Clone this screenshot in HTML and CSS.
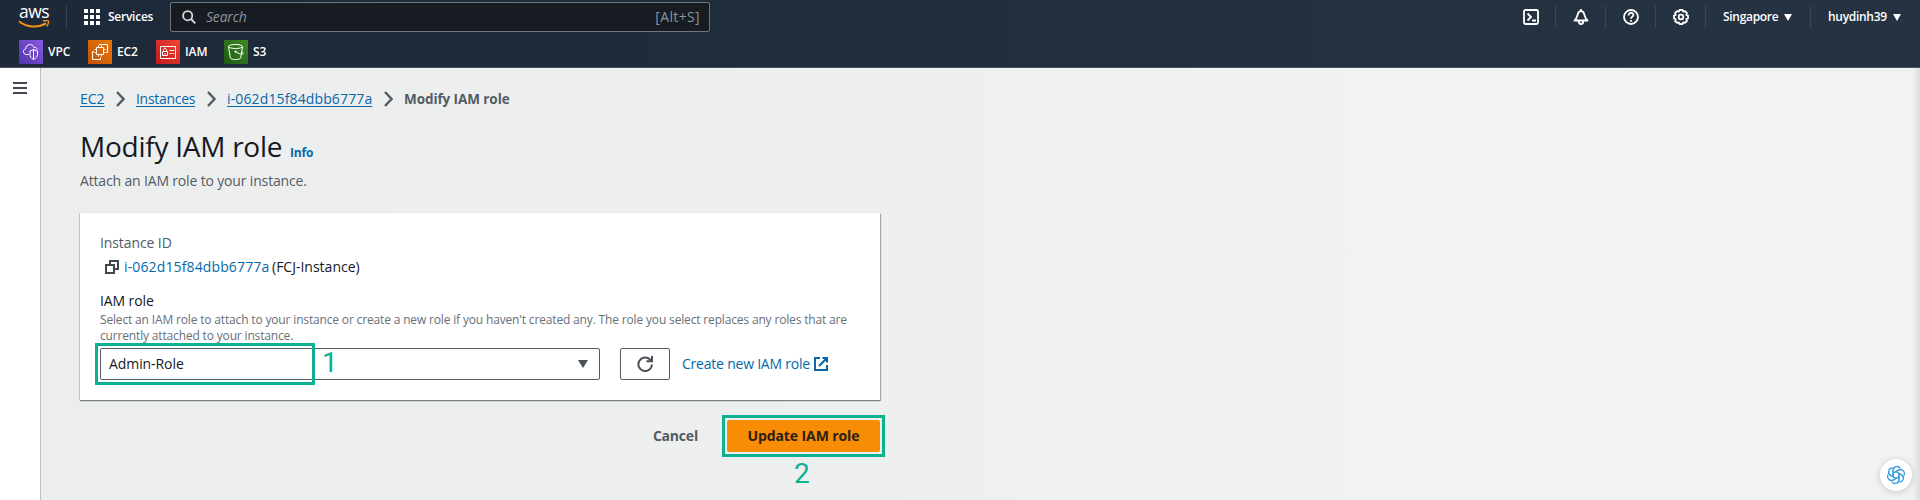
FILE: index.html
```html
<!DOCTYPE html>
<html lang="en">
<head>
<meta charset="utf-8">
<title>Modify IAM role</title>
<link rel="stylesheet" href="styles.css">
</head>
<body>
<header class="topbar">
  <div class="nav">
    <div class="logo">
      <span class="logo-text">aws</span>
      <svg class="logo-smile" width="32" height="9" viewBox="0 0 32 9" fill="none" stroke="#f39412"><path d="M1 1.200C8.500 7.600 20 8 28 3.300" stroke-width="2"/><path d="M25 1C28 .3 30.500.4 30.600 1.200 30.800 2.500 30 4.600 28.600 6.400" stroke-width="1.400"/></svg>
    </div>
    <i class="sep sep-logo"></i>
    <div class="services">
      <svg width="16" height="16" viewBox="0 0 16 16" fill="#fff"><path d="M0 0h4v4H0zM6 0h4v4H6zM12 0h4v4h-4zM0 6h4v4H0zM6 6h4v4H6zM12 6h4v4h-4zM0 12h4v4H0zM6 12h4v4H6zM12 12h4v4h-4z"/></svg>
      <span>Services</span>
    </div>
    <div class="search">
      <svg width="14" height="14" viewBox="0 0 14 14" fill="none" stroke="#d5dbdb" stroke-width="1.800"><circle cx="5.700" cy="5.700" r="4.600"/><path d="M9 9l4.300 4.300"/></svg>
      <span class="placeholder">Search</span>
      <span class="shortcut">[Alt+S]</span>
    </div>
    <div class="tools">
      <span class="tool"><svg width="16" height="16" viewBox="0 0 16 16" fill="none" stroke="#fff" stroke-width="1.800"><rect x="1" y="1" width="14" height="14" rx="1.500"/><path d="M4.500 4.500L8 8l-3.500 3.500M9 11.500h4"/></svg></span>
      <i class="sep"></i>
      <span class="tool"><svg width="16" height="16" viewBox="0 0 16 16" fill="none" stroke="#fff" stroke-width="1.800" stroke-linejoin="round"><path d="M8 0v2M1.500 11.500C4 9.500 4 7.500 4.800 5 5.500 3 6.500 2 8 2s2.500 1 3.200 3c.8 2.500.8 4.500 3.300 6.500zM5.700 12c0 4 4.600 4 4.600 0"/></svg></span>
      <i class="sep"></i>
      <span class="tool"><svg width="16" height="16" viewBox="0 0 16 16" fill="none" stroke="#fff" stroke-width="1.800"><circle cx="8" cy="8" r="7"/><path d="M5.700 6.500C5.500 3 10.400 3 10.400 6.100 10.400 8 8 7.700 8 9.800M8 11v1.800"/></svg></span>
      <i class="sep"></i>
      <span class="tool"><svg width="16" height="16" viewBox="0 0 16 16" fill="none" stroke="#fff" stroke-width="1.800" stroke-linejoin="round"><path d="M6.500 1h3l.7 1.700 1.800-.6 1.900 1.900-.6 1.800 1.700.7v3l-1.700.7.6 1.800-1.900 1.900-1.800-.6L9.500 15h-3l-.7-1.700-1.800.6L2.100 12l.6-1.800L1 9.500v-3l1.700-.7L2.100 4 4 2.100l1.800.6z"/><circle cx="8" cy="8" r="2.300"/></svg></span>
      <i class="sep"></i>
      <span class="account region">Singapore <b class="caret"></b></span>
      <i class="sep"></i>
      <span class="account user">huydinh39 <b class="caret"></b></span>
    </div>
  </div>
  <div class="favorites">
    <span class="fav fav-vpc"><svg class="tile vpc" viewBox="0 0 24 24"><path d="M10 14.500H7.200c-3.600-.3-3.600-5-.6-5.500C6.800 3.800 13.700 3 15 7.500c2-.3 3 .3 3.200 2M14.500 9.500l4 1.500v3.500c0 2.200-1.500 3.700-4 5-2.500-1.300-3.500-2.800-3.500-5V11zM14.500 9.500v10"/></svg>VPC</span>
    <span class="fav fav-ec2"><svg class="tile ec2" viewBox="0 0 24 24"><path d="M8.500 7.500h7v7h-7zM10.500 5.500v2M13.500 5.500v2M10.500 14.500v2M13.500 14.500v2M6.500 9.500h2M6.500 12.500h2M15.500 9.500h2M15.500 12.500h2M11.500 5.500v-1h8v8h-1.500M6 11.500H4.500v8h8V17.500"/></svg>EC2</span>
    <span class="fav fav-iam"><svg class="tile iam" viewBox="0 0 24 24"><path d="M4.500 6.500h15v12h-15zM6.500 11.500h5v4h-5zM7.500 11.500V9.800c0-2 3-2 3 0v1.700M9 13v1.500M13.500 10.500h4.500M13.500 13.500h2M16.500 13.500H18"/></svg>IAM</span>
    <span class="fav fav-s3"><svg class="tile s3" viewBox="0 0 24 24"><ellipse cx="11.500" cy="6.500" rx="7" ry="2"/><path d="M4.500 6.500l1.800 11.500c1 2 9.400 2 10.400 0l1.800-11.500M11 11.500c3 2 6.500 3 8 2.400 1-.8-.6-1.600-2-2.400"/><circle cx="11.500" cy="11.500" r=".7"/></svg>S3</span>
  </div>
</header>
<div class="shell">
  <aside class="rail">
    <svg width="14" height="12" viewBox="0 0 14 12" fill="#414750"><path d="M0 0h14v2H0zM0 5h14v2H0zM0 10h14v2H0z"/></svg>
  </aside>
  <main class="main">
    <nav class="crumbs">
      <a class="c-ec2">EC2</a><svg class="chev" viewBox="0 0 9 16"><path d="M1 1l6.500 7L1 15"/></svg>
      <a class="c-inst">Instances</a><svg class="chev" viewBox="0 0 9 16"><path d="M1 1l6.500 7L1 15"/></svg>
      <a class="c-id">i-062d15f84dbb6777a</a><svg class="chev" viewBox="0 0 9 16"><path d="M1 1l6.500 7L1 15"/></svg>
      <b>Modify IAM role</b>
    </nav>
    <div class="title"><h1>Modify IAM role</h1><a class="info">Info</a></div>
    <p class="lead">Attach an IAM role to your instance.</p>
    <section class="card">
      <div class="label muted">Instance ID</div>
      <div class="instance">
        <svg width="14" height="14" viewBox="0 0 14 14" fill="none" stroke="#414750" stroke-width="2"><path d="M1 5h8v8H1zM5 5V1h8v8H9"/></svg>
        <a class="id">i-062d15f84dbb6777a</a>
        <span class="iname">(FCJ-Instance)</span>
      </div>
      <div class="label role-label">IAM role</div>
      <div class="hint">Select an IAM role to attach to your instance or create a new role if you haven't created any. The role you select replaces any roles that are<br>currently attached to your instance.</div>
      <div class="controls">
        <div class="select">
          <span>Admin-Role</span>
          <svg width="10" height="8" viewBox="0 0 10 8" fill="#4a5057"><path d="M0 0h10L5 8z"/></svg>
          <div class="mark mark-one"></div>
          <span class="step step-one">1</span>
        </div>
        <div class="refresh"><svg width="16" height="16" viewBox="0 0 16 16" fill="none" stroke="#4a5057" stroke-width="2"><path d="M15 8.500A6.800 6.800 0 1 1 12.800 3.200L14.800 5"/><path d="M15 0v5.300H9.500"/></svg></div>
        <a class="create">Create new IAM role</a>
        <svg class="ext" width="14" height="14" viewBox="0 0 14 14" fill="none" stroke="#0668a9" stroke-width="2"><path d="M6 1H1v12h12V8M8.500 1H13v4.500M13 1L5 9"/></svg>
      </div>
    </section>
    <div class="actions">
      <span class="cancel">Cancel</span>
      <div class="update">Update IAM role<div class="mark mark-two"></div><span class="step step-two">2</span></div>
    </div>
  </main>
  <div class="assistant">
    <svg width="20" height="20" viewBox="-10 -10 20 20" fill="none" stroke="#3c9fe0" stroke-width="1.300" stroke-linejoin="round">
      <defs><path id="petal" d="M-3 1.700V-4.700C-3-8.800 2.400-9.800 4.300-6.600M-3-1.700L2.200-4.700C3.500-5.500 5-5.500 6-4.900"/></defs>
      <use href="#petal"/><use href="#petal" transform="rotate(60)"/><use href="#petal" transform="rotate(120)"/><use href="#petal" transform="rotate(180)"/><use href="#petal" transform="rotate(240)"/><use href="#petal" transform="rotate(300)"/>
    </svg>
  </div>
</div>
</body>
</html>
```
FILE: styles.css
```css
* { box-sizing: border-box; }
html { height: 500px; overflow: hidden; }
body {
  margin: 0;
  height: 500px;
  overflow: hidden;
  display: flex;
  flex-direction: column;
  font: 14px/20px "Open Sans", "Noto Sans", sans-serif;
  color: #16191f;
}
svg { flex: none; display: block; }
h1, p { margin: 0; }

.topbar {
  height: 68px;
  flex: none;
  background: linear-gradient(90deg, #1d2939, #1f2c3b 40%, #243240 75%, #253242);
  border-bottom: 1px solid #4a4f5c;
  color: #fff;
}
.nav { display: flex; height: 34px; align-items: center; padding-left: 18px; }
.logo { width: 32px; height: 34px; text-align: center; }
.logo-text { display: block; height: 20px; font-size: 17.5px; line-height: 22px; font-weight: 500; letter-spacing: -0.6px; }
.sep { width: 1px; height: 22px; background: #3b4754; flex: none; }
.sep-logo { margin-left: 16px; }
.services { display: flex; align-items: center; gap: 8px; margin-left: 17px; width: 86px; font-size: 12px; font-weight: 600; letter-spacing: -0.25px; }
.search {
  width: 540px;
  height: 30px;
  border: 1px solid #70777b;
  border-radius: 2px;
  background: #171c22;
  display: flex;
  align-items: center;
  padding: 0 9px 0 11px;
  color: #8a9499;
}
.placeholder { margin-left: 10px; flex: 1; font-style: italic; letter-spacing: -0.2px; }
.shortcut { letter-spacing: 0.35px; }
.tools { display: flex; align-items: center; margin-left: auto; }
.tool { width: 49px; display: flex; justify-content: center; }
.account { display: flex; align-items: center; font-size: 12px; font-weight: 600; letter-spacing: -0.3px; }
.caret { border: 4px solid transparent; border-top: 7px solid #fff; border-bottom: 0; }
.region { width: 104px; padding: 0 18px 0 17px; justify-content: space-between; }
.user { width: 109px; padding: 0 19px 0 17px; justify-content: space-between; }

.favorites { display: flex; padding: 6px 0 0 19px; }
.fav { display: flex; align-items: center; gap: 5px; font-size: 12px; font-weight: 600; line-height: 24px; letter-spacing: -0.1px; }
.fav-vpc { width: 69px; }
.fav-ec2, .fav-iam { width: 68px; }
.tile { width: 24px; height: 24px; fill: none; stroke: #fff; stroke-width: 1; }
.vpc { background: linear-gradient(45deg, #5033ad, #8a5be0); }
.ec2 { background: linear-gradient(45deg, #c95208, #e87808); }
.iam { background: linear-gradient(45deg, #c0191c, #ee4533); }
.s3 { background: linear-gradient(45deg, #1b5a12, #3f8a24); }

.shell {
  flex: 1;
  display: flex;
  position: relative;
  background: linear-gradient(90deg, transparent 1912px, #dcdedf 1920px), linear-gradient(90deg, #eceeee, #eef0f0 50%, #f1f3f2 75%);
}
.rail { width: 41px; border-right: 1px solid #bdc1c3; background: #fff; padding: 14px 0 0 13px; }
.main { width: 839px; padding: 0 0 0 39px; }

.crumbs { display: flex; align-items: center; height: 20px; margin-top: 21px; color: #545b64; white-space: nowrap; }
.crumbs a { flex: none; color: #0668a9; text-decoration: underline; text-underline-offset: 2px; }
.c-ec2 { width: 24px; }
.c-inst { width: 59px; letter-spacing: -0.3px; }
.c-id { width: 145px; letter-spacing: 0.13px; }
.chev { width: 9px; height: 16px; margin: 0 11.5px; fill: none; stroke: #545b64; stroke-width: 2.4; }
.crumbs b { font-size: 13.5px; font-weight: 700; letter-spacing: -0.08px; }

.title { display: flex; align-items: baseline; height: 36px; margin-top: 19px; }
.title h1 { font-size: 28px; line-height: 36px; font-weight: 400; letter-spacing: -0.25px; width: 210px; white-space: nowrap; }
.info { font-size: 12px; font-weight: 700; letter-spacing: -0.2px; color: #0668a9; }
.lead { margin-top: 7px; color: #545b64; letter-spacing: -0.16px; }

.card {
  margin-top: 22px;
  height: 187px;
  background: #fff;
  box-shadow: 0 1px 1px #7b8083, 1px 1px 1px #aaadb0, -1px 0 1px #d0d3d4;
  padding: 20px;
}
.label { letter-spacing: -0.1px; }
.muted { color: #545b64; }
.instance { display: flex; align-items: center; height: 20px; margin-top: 4px; padding-left: 5px; white-space: nowrap; }
.id { flex: none; width: 153px; padding-left: 5px; color: #0668a9; letter-spacing: 0.13px; }
.role-label { margin-top: 14px; }
.hint { font-size: 12px; line-height: 16px; color: #687078; white-space: nowrap; margin-top: 1px; letter-spacing: -0.16px; }
.controls { display: flex; align-items: center; margin-top: 4px; height: 32px; }
.select {
  position: relative;
  width: 500px;
  height: 32px;
  border: 1px solid #545b64;
  border-radius: 2px;
  display: flex;
  align-items: center;
  justify-content: space-between;
  padding: 0 11px 0 8px;
  letter-spacing: -0.08px;
}
.mark { position: absolute; border: 3px solid #0bb191; pointer-events: none; }
.mark-one { left: -6px; top: -6px; width: 220px; height: 42px; }
.step { position: absolute; font: 400 28px/32px Roboto, "Liberation Sans", sans-serif; letter-spacing: 0; color: #0bb191; }
.step-one { left: 221px; top: -2px; }
.refresh { width: 50px; height: 32px; margin-left: 20px; border: 1px solid #545b64; border-radius: 2px; display: flex; align-items: center; justify-content: center; }
.create { margin-left: 12px; width: 132px; color: #0668a9; white-space: nowrap; letter-spacing: -0.22px; }

.actions { display: flex; justify-content: flex-end; align-items: center; margin-top: 20px; font-weight: 700; }
.cancel { margin-right: 29px; color: #545b64; letter-spacing: -0.2px; }
.update {
  position: relative;
  width: 153px;
  height: 32px;
  line-height: 32px;
  border-radius: 2px;
  background: #f88c04;
  text-align: center;
  letter-spacing: -0.1px;
  color: #2b2018;
  white-space: nowrap;
}
.mark-two { left: -5px; top: -5px; width: 163px; height: 42px; }
.step-two { left: 67px; top: 38px; }

.assistant {
  position: absolute;
  left: 1880px;
  top: 391px;
  width: 32px;
  height: 32px;
  border-radius: 50%;
  background: #fff;
  box-shadow: 0 1px 6px #c4c7c8;
  display: flex;
  align-items: center;
  justify-content: center;
}
```
